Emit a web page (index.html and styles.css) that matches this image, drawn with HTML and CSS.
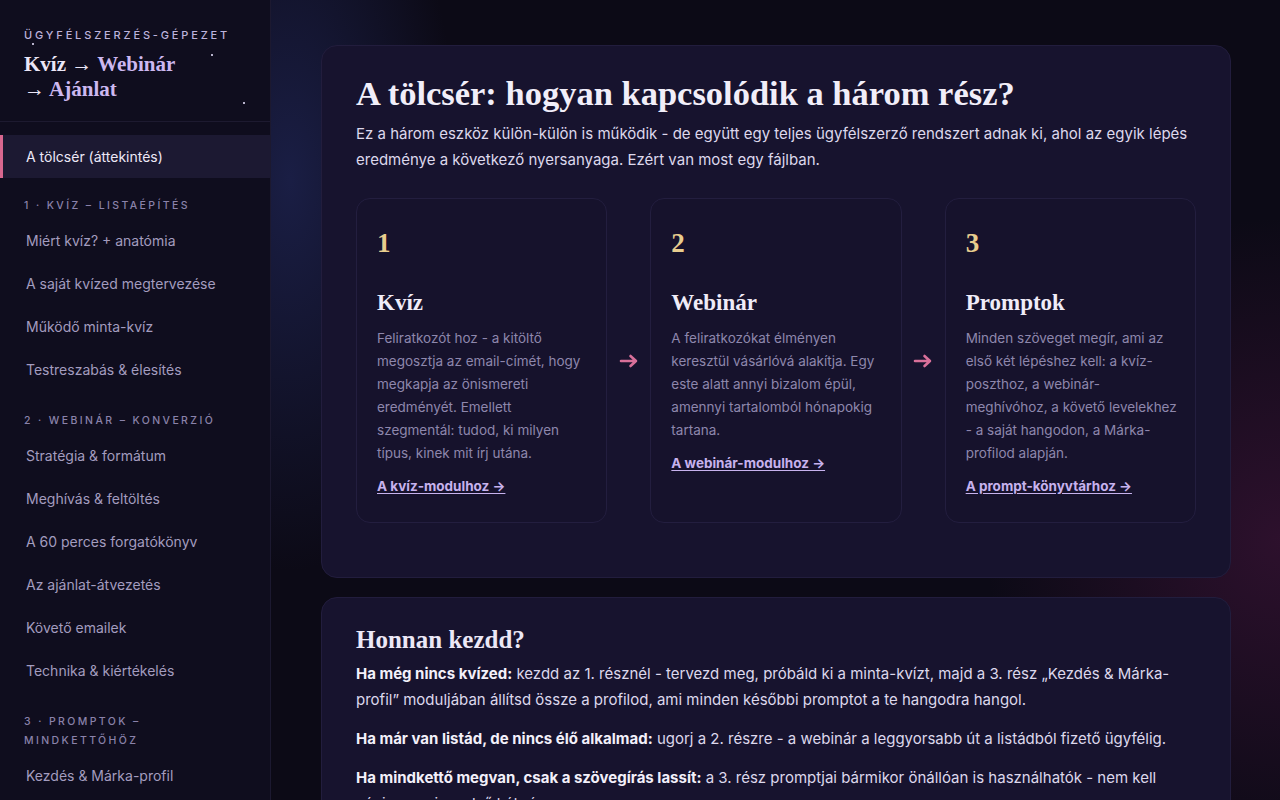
FILE: index.html
```html
<!DOCTYPE html>
<html lang="hu">
<head>
<meta charset="utf-8">
<title>Ügyfélszerzés-gépezet</title>
<link rel="stylesheet" href="styles.css">
</head>
<body>
<div class="app">
  <aside class="sidebar">
    <div class="brand">
      <span class="star s1"></span><span class="star s2"></span><span class="star s3"></span>
      <div class="brand-label">Ügyfélszerzés-gépezet</div>
      <div class="brand-title">Kvíz → <em>Webinár</em><br>→ <em>Ajánlat</em></div>
    </div>
    <nav class="nav">
      <a class="nav-item active">A tölcsér (áttekintés)</a>
      <div class="nav-label nav-label-first">1 · Kvíz – listaépítés</div>
      <a class="nav-item">Miért kvíz? + anatómia</a>
      <a class="nav-item">A saját kvízed megtervezése</a>
      <a class="nav-item">Működő minta-kvíz</a>
      <a class="nav-item">Testreszabás &amp; élesítés</a>
      <div class="nav-label">2 · Webinár – konverzió</div>
      <a class="nav-item">Stratégia &amp; formátum</a>
      <a class="nav-item">Meghívás &amp; feltöltés</a>
      <a class="nav-item">A 60 perces forgatókönyv</a>
      <a class="nav-item">Az ajánlat-átvezetés</a>
      <a class="nav-item">Követő emailek</a>
      <a class="nav-item">Technika &amp; kiértékelés</a>
      <div class="nav-label">3 · Promptok – mindkettőhöz</div>
      <a class="nav-item">Kezdés &amp; Márka-profil</a>
    </nav>
  </aside>
  <main class="main">
    <section class="panel">
      <h1 class="panel-title">A tölcsér: hogyan kapcsolódik a három rész?</h1>
      <p class="lead">Ez a három eszköz külön-külön is működik - de együtt egy teljes ügyfélszerző rendszert adnak ki, ahol az egyik lépés eredménye a következő nyersanyaga. Ezért van most egy fájlban.</p>
      <div class="steps">
        <div class="step">
          <div class="step-num">1</div>
          <h3 class="step-title">Kvíz</h3>
          <p class="step-text">Feliratkozót hoz - a kitöltő megosztja az email-címét, hogy megkapja az önismereti eredményét. Emellett szegmentál: tudod, ki milyen típus, kinek mit írj utána.</p>
          <a class="step-link">A kvíz-modulhoz →</a>
        </div>
        <div class="step-arrow"><svg width="20" height="14" viewBox="0 0 20 14" fill="none" stroke="#d9709a" stroke-width="2.6" stroke-linecap="round" stroke-linejoin="round"><path d="M2 7h15M11.5 2l5.5 5-5.5 5"/></svg></div>
        <div class="step">
          <div class="step-num">2</div>
          <h3 class="step-title">Webinár</h3>
          <p class="step-text">A feliratkozókat élményen keresztül vásárlóvá alakítja. Egy este alatt annyi bizalom épül, amennyi tartalomból hónapokig tartana.</p>
          <a class="step-link">A webinár-modulhoz →</a>
        </div>
        <div class="step-arrow"><svg width="20" height="14" viewBox="0 0 20 14" fill="none" stroke="#d9709a" stroke-width="2.6" stroke-linecap="round" stroke-linejoin="round"><path d="M2 7h15M11.5 2l5.5 5-5.5 5"/></svg></div>
        <div class="step">
          <div class="step-num">3</div>
          <h3 class="step-title">Promptok</h3>
          <p class="step-text">Minden szöveget megír, ami az első két lépéshez kell: a kvíz-poszthoz, a webinár-meghívóhoz, a követő levelekhez - a saját hangodon, a Márka-profilod alapján.</p>
          <a class="step-link">A prompt-könyvtárhoz →</a>
        </div>
      </div>
    </section>
    <section class="panel panel-start">
      <h2 class="panel-subtitle">Honnan kezdd?</h2>
      <p class="para"><strong>Ha még nincs kvízed:</strong> kezdd az 1. résznél - tervezd meg, próbáld ki a minta-kvízt, majd a 3. rész „Kezdés &amp; Márka-profil” moduljában állítsd össze a profilod, ami minden későbbi promptot a te hangodra hangol.</p>
      <p class="para"><strong>Ha már van listád, de nincs élő alkalmad:</strong> ugorj a 2. részre - a webinár a leggyorsabb út a listádból fizető ügyfélig.</p>
      <p class="para"><strong>Ha mindkettő megvan, csak a szövegírás lassít:</strong> a 3. rész promptjai bármikor önállóan is használhatók - nem kell végigmenni az első két részen.</p>
    </section>
  </main>
</div>
</body>
</html>
```

FILE: styles.css
```css
* { box-sizing: border-box; }
html, body { margin: 0; padding: 0; height: 100%; }
body {
  font-family: "Inter", "Noto Sans", sans-serif;
  color: #e9e5f5;
  background: #0c0a16;
  overflow: hidden;
}
.app {
  display: flex;
  height: 800px;
  background:
    radial-gradient(ellipse 240px 560px at 290px 180px, rgba(40, 50, 115, 0.5), transparent 70%),
    radial-gradient(ellipse 420px 460px at 1280px 540px, rgba(85, 24, 72, 0.45), transparent 70%),
    #0c0a16;
}
.sidebar {
  width: 271px;
  flex: 0 0 271px;
  background: #0f0d1e;
  border-right: 1px solid #1c1930;
  display: flex;
  flex-direction: column;
}
.brand {
  position: relative;
  padding: 28px 24px 19px;
  border-bottom: 1px solid #1d1a30;
}
.star {
  position: absolute;
  width: 1.5px;
  height: 1.5px;
  background: #d8d2ee;
  border-radius: 50%;
}
.s1 { left: 32px; top: 43px; }
.s2 { left: 211px; top: 54px; }
.s3 { left: 243px; top: 102px; }
.brand-label {
  font-size: 11px;
  line-height: 14px;
  letter-spacing: 2.85px;
  text-transform: uppercase;
  color: #bdb3dc;
  font-weight: 500;
}
.brand-title {
  margin-top: 10px;
  font-family: "Liberation Serif", "DejaVu Serif", serif;
  font-weight: 700;
  font-size: 21px;
  line-height: 25px;
  color: #ebe6f6;
}
.brand-title em {
  font-style: normal;
  color: #cdb8f0;
}
.nav {
  padding-top: 13px;
  display: flex;
  flex-direction: column;
}
.nav-item {
  display: block;
  padding: 12px 23px;
  font-size: 14px;
  line-height: 19px;
  color: #a39cbf;
  border-left: 3px solid transparent;
}
.nav-item.active {
  background: #1c1932;
  color: #ece8f7;
  border-left-color: #d8678f;
}
.nav-label {
  padding: 20px 24px 4px;
  font-size: 10.5px;
  line-height: 19px;
  letter-spacing: 2.4px;
  text-transform: uppercase;
  color: #8a82aa;
  font-weight: 500;
}
.nav-label-first { padding-top: 18px; }
.main {
  flex: 1;
  padding: 45px 49px 0 50px;
  display: flex;
  flex-direction: column;
  gap: 19px;
  min-width: 0;
}
.panel {
  background: #17132e;
  border: 1px solid #221d3d;
  border-radius: 16px;
  padding: 27px 34px 34px;
}
.panel-title {
  margin: 0;
  font-family: "Liberation Serif", "DejaVu Serif", serif;
  font-weight: 700;
  font-size: 34.5px;
  line-height: 40px;
  color: #f1eef9;
}
.lead {
  margin: 8px 0 0;
  font-size: 15px;
  line-height: 26px;
  color: #ddd8ec;
}
.steps {
  margin-top: 25px;
  margin-bottom: 20px;
  display: grid;
  grid-template-columns: 1fr 43px 1fr 43px 1fr;
}
.step {
  border: 1px solid #231e3f;
  border-radius: 14px;
  padding: 28px 17px 26px 20px;
  background: #16122c;
}
.step-num {
  font-family: "Liberation Serif", "DejaVu Serif", serif;
  font-weight: 700;
  font-size: 27px;
  line-height: 32px;
  color: #e8cd8e;
}
.step-title {
  margin: 30px 0 0;
  font-family: "Liberation Serif", "DejaVu Serif", serif;
  font-weight: 700;
  font-size: 23px;
  line-height: 28px;
  color: #f0ecf8;
}
.step-text {
  margin: 10px 0 0;
  font-size: 13.5px;
  line-height: 23px;
  color: #8e87ac;
}
.step-link {
  display: inline-block;
  margin-top: 11px;
  font-size: 13.5px;
  line-height: 20px;
  font-weight: 700;
  color: #c7b2ee;
  text-decoration: underline;
  text-underline-offset: 2px;
}
.step-arrow {
  display: flex;
  align-items: center;
  justify-content: center;
}
.panel-subtitle {
  margin: 0;
  font-family: "Liberation Serif", "DejaVu Serif", serif;
  font-weight: 700;
  font-size: 25px;
  line-height: 30px;
  color: #ece8f6;
}
.para {
  margin: 6px 0 0;
  font-size: 15px;
  line-height: 26px;
  color: #ddd8ec;
}
.para + .para { margin-top: 13px; }
.para strong { color: #f3f0fa; font-weight: 700; }
```
